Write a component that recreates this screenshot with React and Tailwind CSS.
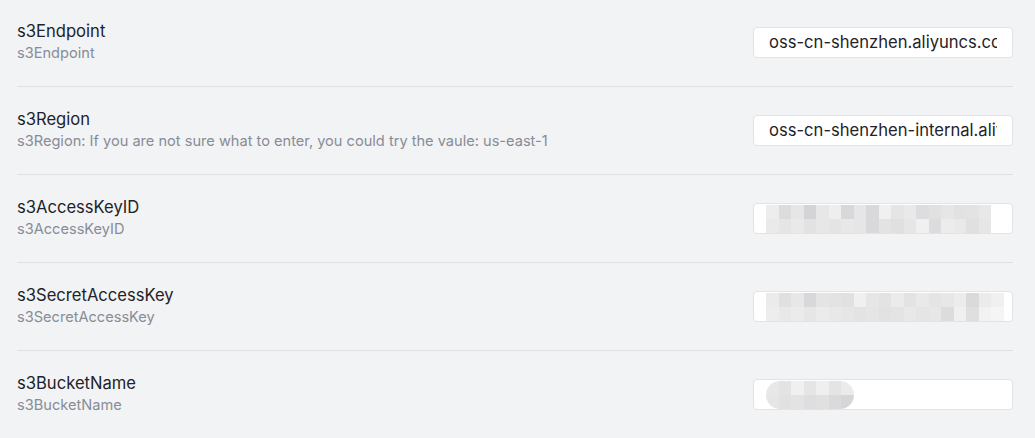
import React from 'react';

const mosaicA = [
  ['bg-[#ededee]', 'bg-[#dcdcdd]', 'bg-[#e6e6e7]', 'bg-[#d4d4d6]', 'bg-[#e7e7e8]', 'bg-[#eeeeee]', 'bg-[#d8d8da]', 'bg-[#e6e6e8]', 'bg-[#d9d9db]', 'bg-[#f0f0f0]', 'bg-[#e5e5e6]', 'bg-[#e9e9ea]', 'bg-[#dddddf]', 'bg-[#e1e1e2]', 'bg-[#e6e6e7]', 'bg-[#e2e2e3]', 'bg-[#e3e3e4]', 'bg-[#e8e8e9]'],
  ['bg-[#eaeaeb]', 'bg-[#e5e5e6]', 'bg-[#e9e9ea]', 'bg-[#e2e2e3]', 'bg-[#e7e7e8]', 'bg-[#e4e4e5]', 'bg-[#e8e8e9]', 'bg-[#e6e6e7]', 'bg-[#d9d9db]', 'bg-[#e3e3e4]', 'bg-[#e0e0e1]', 'bg-[#e6e6e7]', 'bg-[#f0f0f0]', 'bg-[#dcdcde]', 'bg-[#ececed]', 'bg-[#e9e9ea]', 'bg-[#e0e0e1]', 'bg-[#e6e6e7]'],
];

const mosaicB = [
  ['bg-[#ebebec]', 'bg-[#e0e0e1]', 'bg-[#e7e7e8]', 'bg-[#d8d8da]', 'bg-[#e4e4e5]', 'bg-[#e3e3e4]', 'bg-[#e1e1e2]', 'bg-[#f0f0f1]', 'bg-[#e6e6e7]', 'bg-[#e3e3e4]', 'bg-[#ebebec]', 'bg-[#e3e3e4]', 'bg-[#e9e9ea]', 'bg-[#e4e4e5]', 'bg-[#e7e7e8]', 'bg-[#ececed]', 'bg-[#dadadb]', 'bg-[#ebebec]', 'bg-[#f0f0f1]'],
  ['bg-[#ededee]', 'bg-[#e8e8e9]', 'bg-[#ebebec]', 'bg-[#e6e6e7]', 'bg-[#ebebec]', 'bg-[#e8e8e9]', 'bg-[#e6e6e7]', 'bg-[#e3e3e4]', 'bg-[#e5e5e6]', 'bg-[#e2e2e3]', 'bg-[#e4e4e5]', 'bg-[#e8e8e9]', 'bg-[#e5e5e6]', 'bg-[#e7e7e8]', 'bg-[#dcdcde]', 'bg-[#f0f0f1]', 'bg-[#dfdfe0]', 'bg-[#f2f2f3]', 'bg-[#f5f5f6]'],
];

const mosaicC = [
  ['bg-[#e8e8e9]', 'bg-[#e3e3e4]', 'bg-[#f0f0f1]', 'bg-[#e5e5e6]', 'bg-[#efeff0]', 'bg-[#e4e4e5]', 'bg-[#ebebec]'],
  ['bg-[#e6e6e7]', 'bg-[#e1e1e2]', 'bg-[#e3e3e4]', 'bg-[#dedee0]', 'bg-[#e0e0e1]', 'bg-[#dadadb]', 'bg-[#d6d6d8]'],
];

const Mosaic = ({ grid, rounded }) => (
  <div className={`flex flex-col overflow-hidden ${rounded ? 'rounded-full' : ''}`}>
    {grid.map((row, i) => (
      <div key={i} className="flex">
        {row.map((c, j) => (
          <div key={j} className={`w-[12.5px] h-[14px] ${c}`} />
        ))}
      </div>
    ))}
  </div>
);

const campos = [
  { titulo: 's3Endpoint', desc: 's3Endpoint', valor: 'oss-cn-shenzhen.aliyuncs.com' },
  { titulo: 's3Region', desc: 's3Region: If you are not sure what to enter, you could try the vaule: us-east-1', valor: 'oss-cn-shenzhen-internal.aliyuncs.com' },
  { titulo: 's3AccessKeyID', desc: 's3AccessKeyID', mosaico: mosaicA },
  { titulo: 's3SecretAccessKey', desc: 's3SecretAccessKey', mosaico: mosaicB },
  { titulo: 's3BucketName', desc: 's3BucketName', mosaico: mosaicC, pill: true },
];

const App = () => {
  return (
    <div className="w-[1035px] h-[438px] overflow-hidden bg-[#f2f3f5] font-['Inter',sans-serif]">
      <div className="-mt-px pl-[17px] pr-[22px]">
        {campos.map((c) => (
          <div key={c.titulo} className="h-[88px] flex items-center justify-between border-b border-[#dfe0e2]">
            <div className="flex flex-col mb-[3px]">
              <span className="text-[16.6px] leading-6 text-[#1f2329]">{c.titulo}</span>
              <span className="text-[14.6px] leading-5 text-[#878c95]">{c.desc}</span>
            </div>
            <div className="w-[260px] h-[31px] rounded-[4px] border border-[#e2e3e5] bg-white flex items-center overflow-hidden">
              {c.valor ? (
                <div className="w-full px-[15px]">
                  <div className="overflow-hidden whitespace-nowrap text-[16.6px] text-[#1f2329]">{c.valor}</div>
                </div>
              ) : (
                <div className="pl-[12px]">
                  <Mosaic grid={c.mosaico} rounded={c.pill} />
                </div>
              )}
            </div>
          </div>
        ))}
      </div>
    </div>
  );
};

export default App;
